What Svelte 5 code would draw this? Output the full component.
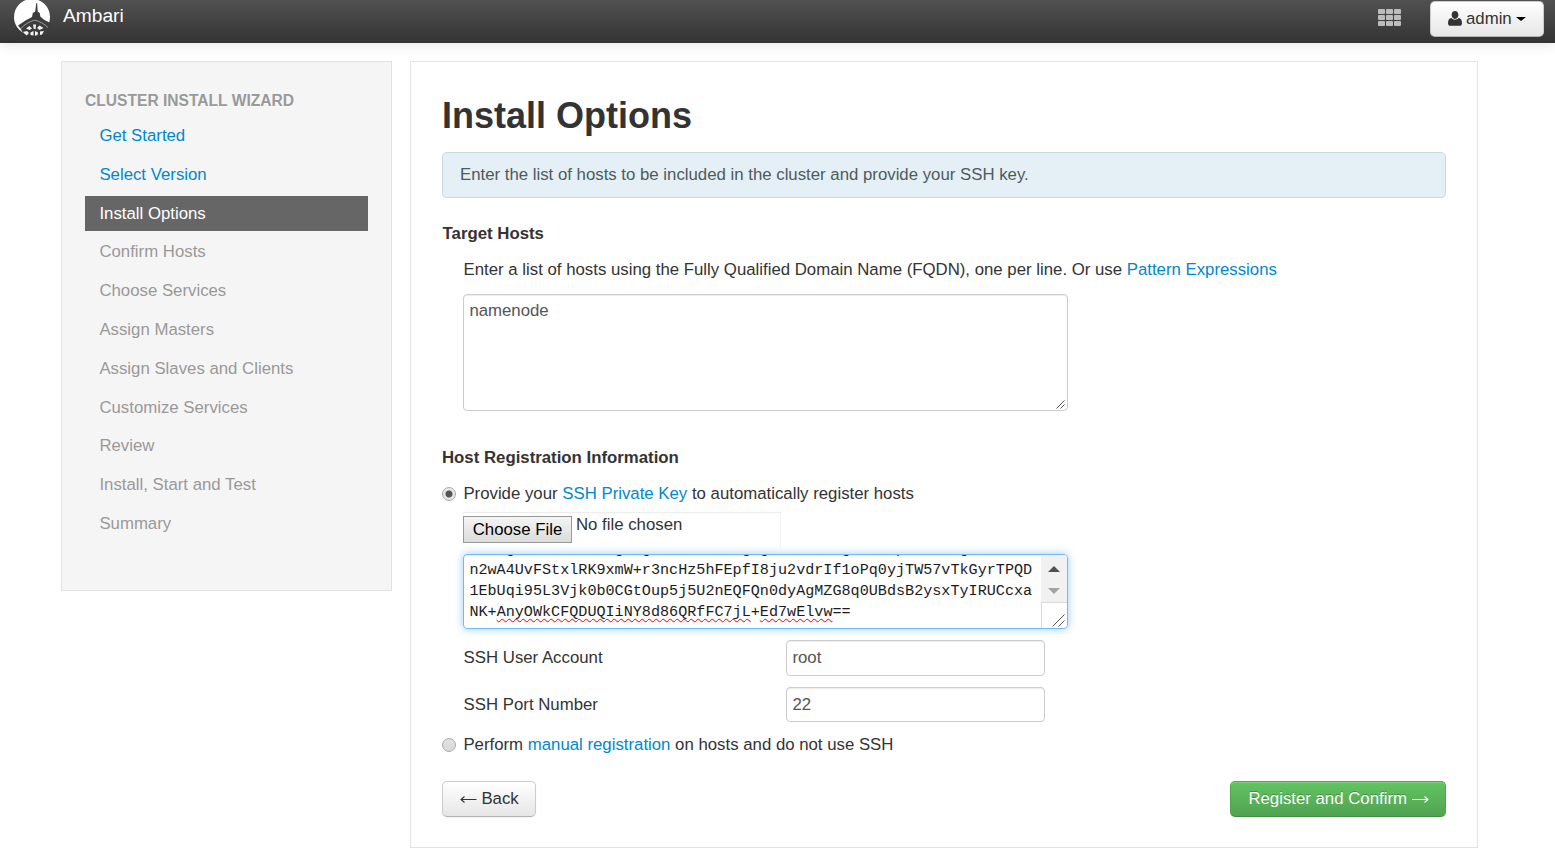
<script>
  const steps = [
    { name: 'Get Started', state: 'done' },
    { name: 'Select Version', state: 'done' },
    { name: 'Install Options', state: 'active' },
    { name: 'Confirm Hosts', state: 'todo' },
    { name: 'Choose Services', state: 'todo' },
    { name: 'Assign Masters', state: 'todo' },
    { name: 'Assign Slaves and Clients', state: 'todo' },
    { name: 'Customize Services', state: 'todo' },
    { name: 'Review', state: 'todo' },
    { name: 'Install, Start and Test', state: 'todo' },
    { name: 'Summary', state: 'todo' }
  ];
  const cells = [0, 1, 2, 3, 4, 5, 6, 7, 8];
  const scrolledLine = '    g           g  g          g g        g     p      g';
</script>

<header class="navbar">
  <div class="brand">
    <svg class="logo" width="38" height="38" viewBox="0 0 38 38">
      <circle cx="19" cy="18" r="18" fill="#fff" />
      <path d="M23.300 4h.8l.6 8.500 2 1.500.6 3.500 4 3.500 7 3.500-1.500 6-3.500 4-6 2.500H16l-6-3-2.500-4.500L5 26.500l7.500-5 6.500-3.500.8-4 2.400-1.500z" fill="#3d3d3d" />
      <path d="M8 29.500c3.500-3.800 8-7 13.500-8.300 5.500 1 9.500 3.600 13.500 7.300" fill="none" stroke="#b5b5b5" stroke-width=".8" />
      <path d="M13 29.500l3.500-2.500 2.500 2.500-2.500 1.500zM20 25.500h3l-.4 4.500h-1.800zM24 29l2.500-2.500 4 2.500-4 2zM10 33l4-1 2 2-2.500 2.500zM17.500 33.500l3-1.500v4.500l-3-.5zM22 32l3 1.500-.5 2.500-2.500.7zM27 32.500l4-.5-2 3.500-2 .5z" fill="#f3f3f3" />
    </svg>
    <span>Ambari</span>
  </div>
  <div class="tools">
    <div class="grid">{#each cells as c (c)}<i></i>{/each}</div>
    <div class="btn admin">
      <svg width="14" height="15" viewBox="0 0 14 15"><path d="M7 0C9 0 10.400 1.600 10.400 3.800S9 8 7 8 3.600 6 3.600 3.800 5 0 7 0zM3.400 7c2 2.300 5.200 2.300 7.200 0C13 7.200 14 9.200 14 12.200c0 1.600-1 2.600-2.500 2.600h-9C1 14.800 0 13.800 0 12.200 0 9.200 1 7.200 3.400 7z" fill="#333" /></svg>
      <span>admin</span><b class="caret"></b>
    </div>
  </div>
</header>

<div class="page">
  <nav class="sidebar">
    <div class="heading">CLUSTER INSTALL WIZARD</div>
    <ul>
      {#each steps as s (s.name)}
        <li class={s.state}>{s.name}</li>
      {/each}
    </ul>
  </nav>

  <main class="panel">
    <h1>Install Options</h1>
    <div class="alert">Enter the list of hosts to be included in the cluster and provide your SSH key.</div>

    <h5 class="target">Target Hosts</h5>
    <p class="intro">Enter a list of hosts using the Fully Qualified Domain Name (FQDN), one per line. Or use <a>Pattern Expressions</a></p>
    <div class="area hosts">namenode
      <svg class="grip" width="9" height="9" viewBox="0 0 9 9"><path d="M.5 8.500l8-8M4.500 8.500l4-4" stroke="#555" fill="none" /></svg>
    </div>

    <h5 class="reg">Host Registration Information</h5>
    <div class="choice"><span class="radio on"></span><span>Provide your <a>SSH Private Key</a> to automatically register hosts</span></div>
    <div class="file"><span class="pick">Choose File</span><span class="chosen">No file chosen</span></div>
    <div class="area key">
      <div class="lines">
        <div>{scrolledLine}</div>
        <div>n2wA4UvFStxlRK9xmW+r3ncHz5hFEpfI8ju2vdrIf1oPq0yjTW57vTkGyrTPQD</div>
        <div>1EbUqi95L3Vjk0b0CGtOup5j5U2nEQFQn0dyAgMZG8q0UBdsB2ysxTyIRUCcxa</div>
        <div>NK+<u>AnyOWkCFQDUQIiNY8d86QRfFC7jL</u>+<u>Ed7wElvw</u>==</div>
      </div>
      <div class="scroll">
        <div class="track">
          <svg width="25" height="47" viewBox="0 0 25 47"><path d="M7 17l6-6 6 6z" fill="#505050" /><path d="M7 33h12l-6 6z" fill="#a3a3a3" /></svg>
        </div>
        <div class="corner"><svg width="13" height="13" viewBox="0 0 13 13"><path d="M.5 12.500l12-12M6.500 12.500l6-6" stroke="#555" fill="none" /></svg></div>
      </div>
    </div>
    <div class="field"><span class="label">SSH User Account</span><span class="input">root</span></div>
    <div class="field port"><span class="label">SSH Port Number</span><span class="input">22</span></div>
    <div class="choice manual"><span class="radio"></span><span>Perform <a>manual registration</a> on hosts and do not use SSH</span></div>

    <div class="actions">
      <div class="btn back"><svg width="17" height="9" viewBox="0 0 17 9"><path d="M1 4.500h15.500M4.500 1.500L1 4.500l3.500 3" stroke="#333" fill="none" stroke-width="1.100" /></svg>Back</div>
      <div class="btn next">Register and Confirm<svg width="17" height="9" viewBox="0 0 17 9"><path d="M0 4.500h16M12.500 1.500l3.500 3-3.500 3" stroke="#fff" fill="none" stroke-width="1.100" /></svg></div>
    </div>
  </main>
</div>

<style>
  :global(body) {
    background: #fff;
    overflow: hidden;
    color: #333;
    font: 16.8px/24px 'Liberation Sans', Arial, sans-serif;
  }
  :global(#app) * { box-sizing: border-box; }
  a { color: #0088cc; }
  .navbar {
    height: 43px;
    display: flex;
    justify-content: space-between;
    background: linear-gradient(#515151, #333);
    box-shadow: 0 1px 12px rgba(0, 0, 0, 0.12);
  }
  .brand {
    display: flex;
    padding-left: 13px;
    gap: 12px;
    font-size: 19.2px;
    color: #fff;
    height: 38px;
  }
  .brand span { line-height: 32px; }
  .logo { display: block; margin-top: -1px; }
  .tools { display: flex; padding: 1px 11px 0 0; gap: 29px; }
  .grid {
    display: grid;
    grid-template-columns: repeat(3, 7px);
    grid-auto-rows: 5px;
    gap: 1px;
    padding-top: 8px;
    height: 26px;
  }
  .grid i { background: #bcbcbc; border-radius: 1px; }
  .btn {
    display: flex;
    align-items: center;
    height: 36px;
    border: 1px solid #ccc;
    border-bottom-color: #b3b3b3;
    border-radius: 5px;
    background: linear-gradient(#fff, #e6e6e6);
    box-shadow: inset 0 1px 0 rgba(255, 255, 255, 0.2), 0 1px 2px rgba(0, 0, 0, 0.05);
    white-space: nowrap;
  }
  .admin { width: 114px; padding-left: 17px; }
  .admin svg { margin-bottom: 2px; }
  .admin span { margin-left: 4px; }
  .caret {
    margin: 0 0 0 4px;
    border: 5px solid transparent;
    border-top: 4px solid #000;
    border-bottom: 0;
  }
  .page {
    display: flex;
    align-items: flex-start;
    gap: 18px;
    padding: 18px 0 0 61px;
  }
  .sidebar {
    width: 331px;
    height: 530px;
    border: 1px solid #e3e3e3;
    background: #f5f5f5;
    padding: 27px 23px 0;
  }
  .heading {
    font-size: 15.6px;
    font-weight: bold;
    color: #999;
    text-shadow: 0 1px 0 rgba(255, 255, 255, 0.5);
  }
  ul {
    list-style: none;
    margin: 5.1px 0 0;
    padding: 0;
    display: flex;
    flex-direction: column;
    gap: 3.8px;
  }
  li { height: 35px; line-height: 35px; padding-left: 14.4px; color: #999; }
  .done { color: #0088cc; }
  .active { background: #666; color: #fff; }
  .panel {
    width: 1068px;
    height: 787px;
    border: 1px solid #e3e3e3;
    padding: 30px 31px 0;
  }
  h1 { margin: 0; font-size: 36px; line-height: 48px; }
  .alert {
    margin-top: 12px;
    height: 46px;
    line-height: 43px;
    padding-left: 17px;
    border: 1px solid #c9dadf;
    border-radius: 5px;
    background: #e4f0f5;
    color: #4f5a60;
  }
  h5 { margin: 24px 0 0; font-size: 16.8px; line-height: 24px; }
  .target { padding-left: 0.6px; }
  .intro { margin: 12px 0 0 21.6px; }
  .area {
    margin-left: 21px;
    width: 605px;
    border: 1px solid #ccc;
    border-radius: 4px;
    position: relative;
    overflow: hidden;
  }
  .hosts {
    margin-top: 12px;
    height: 117px;
    padding: 4px 5.4px;
    color: #555;
    box-shadow: inset 0 1px 1px rgba(0, 0, 0, 0.075);
  }
  .grip { position: absolute; right: 2px; bottom: 1px; }
  .reg { margin-top: 35px; }
  .choice { display: flex; align-items: center; margin-top: 12px; height: 24px; }
  .radio {
    width: 14px;
    height: 14px;
    margin-right: 7.4px;
    border: 1px solid #aaa;
    border-radius: 50%;
    background: linear-gradient(#e2e2e2, #d8d8d8);
  }
  .on { background: radial-gradient(circle, #555 0 3px, #e6e6e6 4px); }
  .file {
    margin: 6px 0 0 21px;
    width: 318px;
    height: 36px;
    display: flex;
    gap: 4px;
    box-shadow: inset 0 1px 1px rgba(0, 0, 0, 0.075), inset -1px 0 1px rgba(0, 0, 0, 0.04);
  }
  .chosen { padding-top: 1px; }
  .pick {
    width: 109px;
    height: 27px;
    margin-top: 4px;
    line-height: 25px;
    text-align: center;
    color: #000;
    border: 1px solid #999;
    background: linear-gradient(#f5f5f5, #dcdcdc);
  }
  .key {
    margin-top: 6px;
    height: 75px;
    display: flex;
    justify-content: space-between;
    border-color: #74b9ef;
    box-shadow: inset 0 1px 1px rgba(0, 0, 0, 0.075), 0 0 9px rgba(82, 168, 236, 0.6);
  }
  .lines {
    display: flex;
    flex-direction: column;
    justify-content: flex-end;
    padding: 0 0 5px 5.4px;
    height: 73px;
    font: 15.13px/21px 'Liberation Mono', 'Courier New', monospace;
    color: #1c1c1c;
    white-space: pre;
  }
  u {
    text-decoration: underline wavy #e00 1px;
    text-underline-offset: 2px;
    text-decoration-skip-ink: none;
  }
  .scroll { width: 26px; display: flex; flex-direction: column; }
  .track { height: 47px; background: #f1f1f1; }
  .track svg { display: block; }
  .corner {
    flex: 1;
    display: flex;
    justify-content: flex-end;
    align-items: flex-end;
    padding: 0 2px 1px 0;
    border: 1px solid #d9d9d9;
    border-width: 1px 0 0 1px;
  }
  .field { display: flex; margin: 11px 0 0 21.6px; height: 36px; }
  .port { height: 35px; }
  .label { width: 322.4px; line-height: 35px; }
  .input {
    width: 259px;
    line-height: 33px;
    padding-left: 5.4px;
    border: 1px solid #ccc;
    border-radius: 4px;
    color: #555;
    box-shadow: inset 0 1px 1px rgba(0, 0, 0, 0.075);
  }
  .manual { margin-top: 11px; }
  .actions { display: flex; justify-content: space-between; margin-top: 24px; }
  .back { width: 94px; padding-left: 17px; gap: 4.4px; }
  .next {
    width: 216px;
    padding-left: 17.4px;
    gap: 4.6px;
    color: #fff;
    border-color: #51a351 #51a351 #448944;
    background: linear-gradient(#62c462, #51a351);
    text-shadow: 0 -1px 0 rgba(0, 0, 0, 0.25);
  }
</style>
